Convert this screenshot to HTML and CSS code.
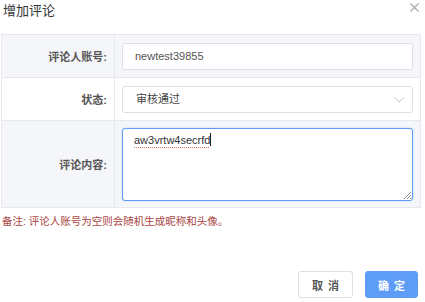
FILE: index.html
```html
<!DOCTYPE html>
<html lang="zh">
  <head>
    <meta charset="UTF-8">
    <meta name="viewport" content="width=device-width, initial-scale=1.0">
    <title>增加评论</title>
    <link rel="stylesheet" href="styles.css">
  </head>
  <body>
    <div class="dialog">
        <div class="dialog-header">
            <span class="dialog-title">增加评论</span>
            <span class="dialog-close">
                <svg width="9" height="9" viewBox="0 0 9 9"><path d="M0.5 0.5L8.5 8.5M8.5 0.5L0.5 8.5" stroke="#a8a8a8" stroke-width="1.1"/></svg>
            </span>
        </div>

        <table class="form-table">
            <tr class="row-odd">
                <th>评论人账号:</th>
                <td><input class="form-input" type="text" value="newtest39855"></td>
            </tr>
            <tr class="row-even">
                <th>状态:</th>
                <td>
                    <div class="select-wrap">
                        <select class="form-input form-select">
                            <option>审核通过</option>
                        </select>
                        <svg class="select-arrow" width="10" height="6" viewBox="0 0 10 6"><path d="M0.5 0.5L5 5L9.5 0.5" fill="none" stroke="#c0c4cc" stroke-width="1"/></svg>
                    </div>
                </td>
            </tr>
            <tr class="row-odd row-tall">
                <th>评论内容:</th>
                <td>
                    <div class="form-textarea">
                        <span class="typo">aw3vrtw4secrfd</span><span class="caret"></span>
                        <svg class="grip" width="8" height="8" viewBox="0 0 8 8"><path d="M1 8L8 1M4 8L8 4M7 8L8 7" stroke="#777" stroke-width="0.8"/></svg>
                    </div>
                </td>
            </tr>
        </table>

        <p class="form-note">备注: 评论人账号为空则会随机生成昵称和头像。</p>

        <div class="dialog-footer">
            <button class="btn">取 消</button>
            <button class="btn btn-primary">确 定</button>
        </div>
    </div>
  </body>
</html>
```

FILE: styles.css
```css
:root {
    --primary-color: #5d9df7;
    --border-color: #e6e8ee;
    --input-border: #dcdfe6;
    --stripe-bg: #f5f6fa;
    --text-primary: #333;
    --text-secondary: #555;
    --note-color: #a94442;
}

body {
    margin: 0;
    padding: 0;
    background: #fff;
    color: var(--text-primary);
    font-family: "Liberation Sans", "Noto Sans CJK SC", sans-serif;
}

.dialog {
    width: 425px;
    height: 302px;
    display: flex;
    flex-direction: column;
}

.dialog-header {
    height: 34px;
    display: flex;
    justify-content: space-between;
    align-items: flex-start;
    padding: 0 6px 0 3px;
}

.dialog-title {
    font-size: 13px;
    line-height: 22px;
    color: #333;
}

.dialog-close {
    margin-top: 3px;
    display: flex;
}

.form-table {
    margin-left: 1px;
    width: 420px;
    border-collapse: collapse;
    table-layout: fixed;
}

.form-table th,
.form-table td {
    border: 1px solid var(--border-color);
    padding: 7px;
    height: 28px;
}

.form-table th {
    width: 98px;
    text-align: right;
    font-size: 11px;
    font-weight: 600;
    color: var(--text-secondary);
}

.row-odd {
    background: var(--stripe-bg);
}

.row-even {
    background: #fff;
}

.row-tall td {
    height: 73px;
    padding: 7px 7px 6px;
}

.form-input {
    box-sizing: border-box;
    width: 100%;
    height: 27px;
    border: 1px solid var(--input-border);
    border-radius: 3px;
    background: #fff;
    padding: 0 12px;
    font-family: inherit;
    font-size: 11px;
    color: var(--text-secondary);
    outline: none;
    display: block;
}

.select-wrap {
    position: relative;
}

.form-select {
    appearance: none;
    -webkit-appearance: none;
    padding-left: 13px;
    color: #444;
}

.select-arrow {
    position: absolute;
    right: 9px;
    top: 11px;
}

.form-textarea {
    position: relative;
    box-sizing: border-box;
    height: 73px;
    border: 1px solid var(--primary-color);
    border-radius: 3px;
    background: #fff;
    padding: 3px 11px;
    font-size: 11px;
    line-height: 16px;
    color: var(--text-primary);
    box-shadow: 0 0 2px rgba(93, 157, 247, 0.4);
}

.typo {
    text-decoration: underline dotted #e07070;
    text-decoration-thickness: 1px;
    text-underline-offset: 3px;
}

.caret {
    display: inline-block;
    width: 1px;
    height: 13px;
    background: #222;
    vertical-align: -2px;
}

.grip {
    position: absolute;
    right: 1px;
    bottom: 1px;
}

.form-note {
    margin: 5px 0 0 2px;
    font-size: 10.5px;
    line-height: 16px;
    color: var(--note-color);
}

.dialog-footer {
    display: flex;
    justify-content: flex-end;
    gap: 12px;
    margin-top: auto;
    padding: 0 7px 4px 0;
}

.btn {
    height: 27px;
    width: 55px;
    border: 1px solid var(--input-border);
    border-radius: 3px;
    background: #fff;
    font-family: inherit;
    font-size: 11px;
    font-weight: bold;
    color: var(--text-secondary);
    padding: 0;
    word-spacing: 2px;
}

.btn-primary {
    width: 53px;
    background: var(--primary-color);
    border-color: var(--primary-color);
    color: #fff;
}
```
